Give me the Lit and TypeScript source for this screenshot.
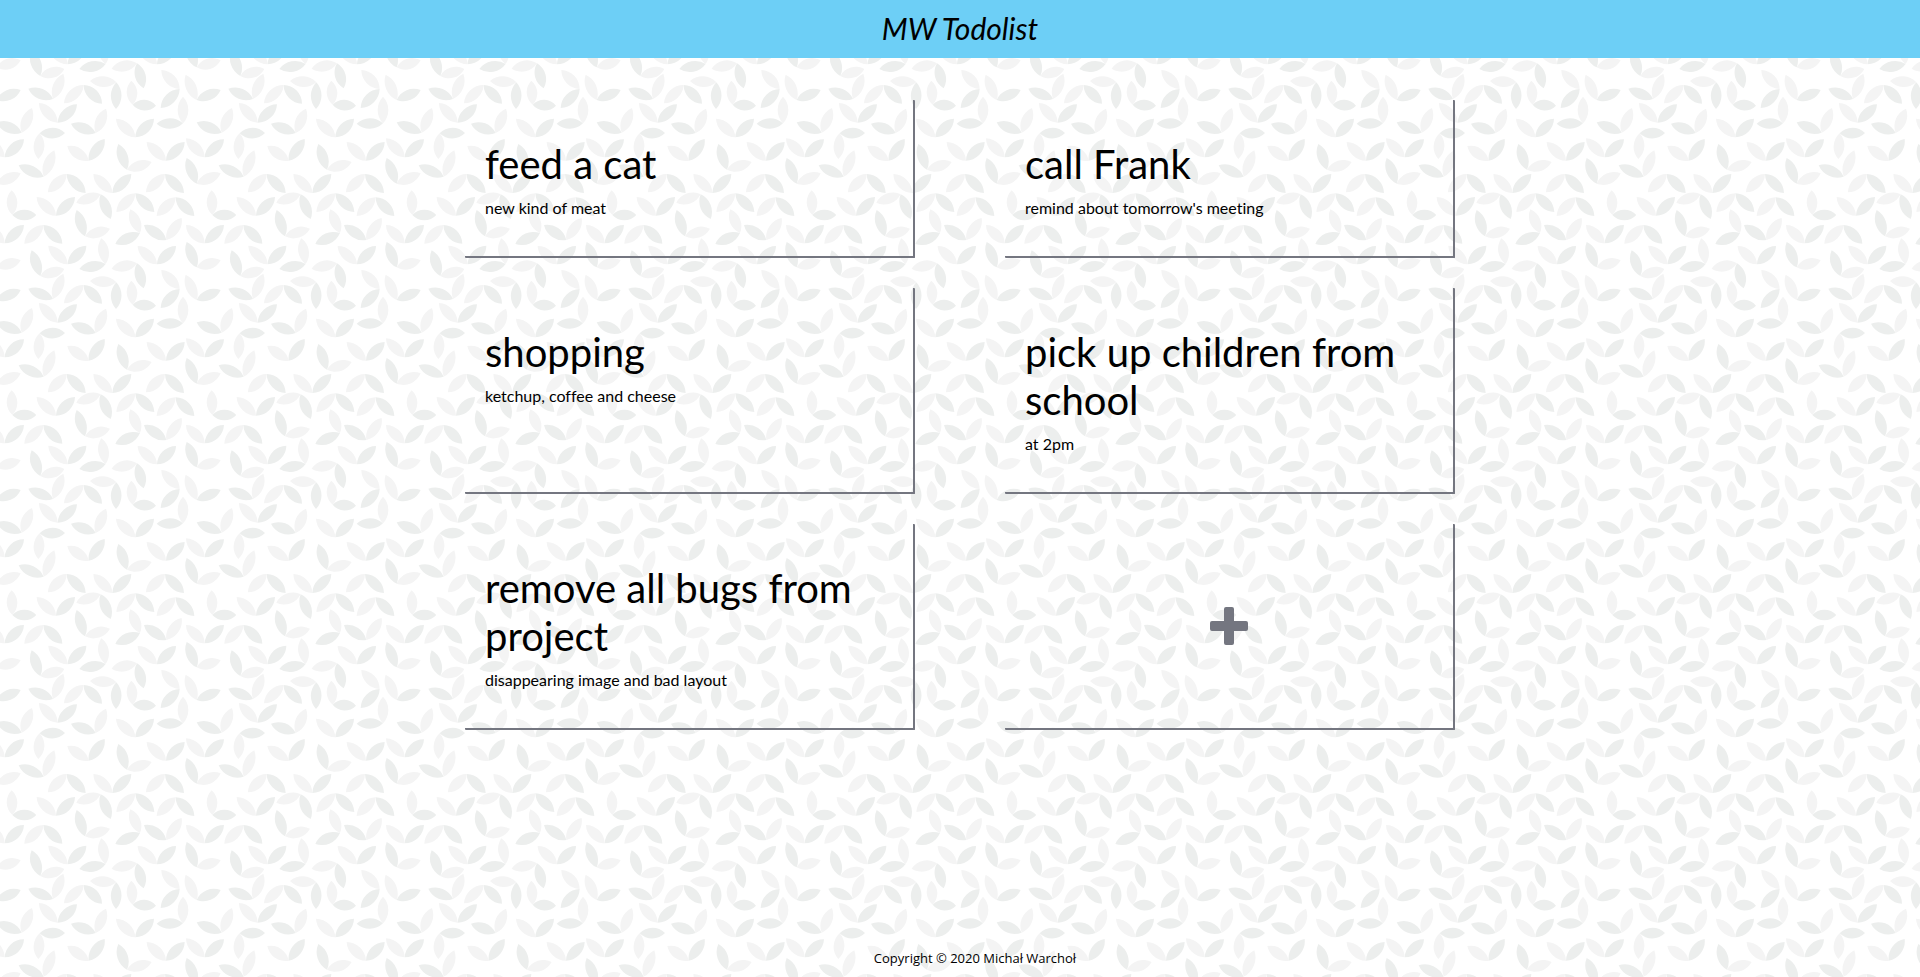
import { LitElement, css, html, svg, unsafeCSS } from "lit";
import { customElement, property, state } from "lit/decorators.js";

interface Task {
  title: string;
  description: string;
}

// Twigs of the wallpaper: joint x, y, then the light leaf's tip and the dark leaf's tip.
const TILE = 600;
const TWIGS: number[][] = [
  [590, 652, 662, 631, 560, 576],
  [121, 678, 193, 657, 95, 601],
  [203, 643, 145, 587, 259, 587],
  [317, 642, 304, 565, 238, 657],
  [411, 640, 335, 656, 431, 715],
  [471, 643, 413, 588, 528, 588],
  [539, 717, 484, 660, 482, 774],
  [590, 750, 557, 674, 662, 720],
  [159, 747, 190, 671, 85, 716],
  [251, 705, 192, 760, 306, 761],
  [349, 697, 270, 693, 348, 777],
  [398, 764, 394, 692, 468, 767],
  [173, 818, 117, 759, 231, 763],
  [549, 820, 549, 740, 470, 821],
  [65, 848, 96, 774, -10, 817],
  [287, 849, 318, 776, 213, 821],
  [406, 862, 348, 806, 462, 806],
  [119, 850, 115, 927, 195, 849],
  [614, 922, 558, 865, 672, 868],
  [266, 932, 202, 888, 314, 867],
  [381, 959, 455, 936, 355, 882],
  [498, 932, 440, 876, 554, 876],
  [131, 980, 163, 901, 56, 946],
  [590, 1001, 662, 970, 560, 924],
  [200, 972, 144, 1027, 257, 1029],
  [337, 1029, 280, 972, 394, 972],
  [495, 972, 438, 1027, 552, 1029],
  [37, 1095, 35, 1021, 109, 1095],
  [168, 1097, 110, 1041, 225, 1041],
  [302, 1033, 229, 1058, 332, 1107],
  [406, 1030, 349, 1086, 463, 1086],
  [527, 1042, 470, 1098, 583, 1098],
  [255, 1159, 330, 1136, 230, 1080],
  [420, 1149, 391, 1078, 346, 1182],
  [499, 1170, 545, 1104, 432, 1125],
  [614, 1180, 558, 1125, 672, 1125],
  [130, 1125, 73, 1181, 187, 1181],
];

// A lens of two equal arcs, 32 units across at its middle whatever its length.
const HALF_WIDTH = 16;
function leaf(x1: number, y1: number, x2: number, y2: number): string {
  const half = Math.hypot(x2 - x1, y2 - y1) / 2;
  const r = Math.round((half * half + HALF_WIDTH * HALF_WIDTH) / (2 * HALF_WIDTH));
  return `M${x1} ${y1}A${r} ${r} 0 0 1 ${x2} ${y2}A${r} ${r} 0 0 1 ${x1} ${y1}Z`;
}

function wallpaper(): string {
  let light = "";
  let dark = "";
  for (const dx of [-TILE, 0, TILE]) {
    for (const dy of [-2 * TILE, -TILE, 0]) {
      for (const [x, y, lx, ly, kx, ky] of TWIGS) {
        light += leaf(x + dx, y + dy, lx + dx, ly + dy);
        dark += leaf(x + dx, y + dy, kx + dx, ky + dy);
      }
    }
  }
  const source =
    `<svg xmlns="http://www.w3.org/2000/svg" width="200" height="200" viewBox="0 0 ${TILE} ${TILE}">` +
    `<path fill="#f4f4f4" d="${light}"/><path fill="#eceeed" d="${dark}"/></svg>`;
  return `url("data:image/svg+xml,${encodeURIComponent(source)}")`;
}

@customElement("task-card")
export class TaskCard extends LitElement {
  static styles = css`
    :host {
      display: block;
      box-sizing: border-box;
      padding: 40px 20px 36px;
      border-right: 2px solid #747680;
      border-bottom: 2px solid #747680;
      border-radius: 1px;
    }
    .title {
      margin: 0 0 8px;
      font-size: 40px;
      line-height: 48px;
      font-weight: 400;
    }
    .description {
      margin: 0;
      font-size: 16px;
      line-height: 24px;
    }
  `;

  @property() heading = "";
  @property() description = "";

  render() {
    return html`
      <h2 class="title">${this.heading}</h2>
      <p class="description">${this.description}</p>
    `;
  }
}

@customElement("app-root")
export class AppRoot extends LitElement {
  static styles = css`
    :host {
      display: flex;
      flex-direction: column;
      min-height: 100vh;
      color: #000;
      font-family: Lato, "Open Sans", sans-serif;
      font-variant-ligatures: none;
      background: #fff ${unsafeCSS(wallpaper())} 0 50px / 200px 200px;
    }
    .header {
      display: flex;
      justify-content: center;
      padding: 8px 16px 10px;
      background: #6dcff6;
    }
    .brand {
      margin: 0;
      font-size: 30px;
      line-height: 40px;
      font-style: italic;
      font-weight: 400;
    }
    .tasks {
      flex: 1;
      display: grid;
      grid-template-columns: 1fr 1fr;
      align-content: start;
      gap: 30px 90px;
      box-sizing: border-box;
      width: 100%;
      max-width: 990px;
      margin: 0 auto;
      padding: 42px 0;
    }
    .add {
      display: flex;
      align-items: center;
      justify-content: center;
      padding: 0;
      border: 0 solid #747680;
      border-width: 0 2px 2px 0;
      border-radius: 1px;
      background: none;
      color: #747680;
      cursor: pointer;
    }
    .plus {
      display: block;
      width: 38px;
      height: 38px;
      fill: currentColor;
    }
    .footer {
      padding: 0 0 7px 30px;
      font-family: "Open Sans", "Noto Sans", sans-serif;
      font-size: 13px;
      line-height: 24px;
      text-align: center;
    }
  `;

  @state() private tasks: Task[] = [
    { title: "feed a cat", description: "new kind of meat" },
    { title: "call Frank", description: "remind about tomorrow's meeting" },
    { title: "shopping", description: "ketchup, coffee and cheese" },
    { title: "pick up children from school", description: "at 2pm" },
    {
      title: "remove all bugs from project",
      description: "disappearing image and bad layout",
    },
  ];

  render() {
    return html`
      <header class="header"><h1 class="brand">MW Todolist</h1></header>
      <main class="tasks">
        ${this.tasks.map(
          (task) => html`<task-card
            .heading=${task.title}
            .description=${task.description}
          ></task-card>`
        )}
        <button class="add" type="button" aria-label="Add task">
          <svg class="plus" viewBox="0 0 38 38" aria-hidden="true">
            ${svg`<path d="M16 0h6a2 2 0 0 1 2 2v12h12a2 2 0 0 1 2 2v6a2 2 0 0 1-2 2H24v12a2 2 0 0 1-2 2h-6a2 2 0 0 1-2-2V24H2a2 2 0 0 1-2-2v-6a2 2 0 0 1 2-2h12V2a2 2 0 0 1 2-2z"/>`}
          </svg>
        </button>
      </main>
      <footer class="footer">Copyright © 2020 Michał Warchoł</footer>
    `;
  }
}
